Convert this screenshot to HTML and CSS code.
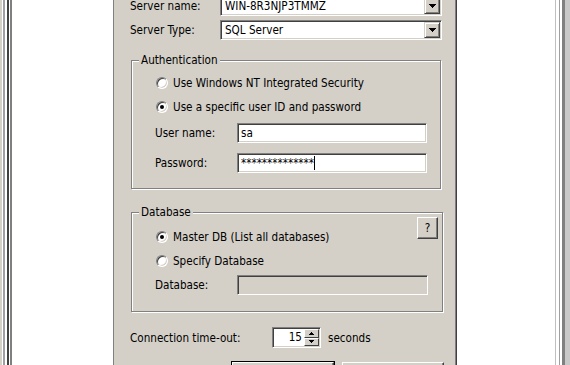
FILE: index.html
```html
<!DOCTYPE html>
<html lang="en">
<head>
    <meta charset="UTF-8">
    <title>Connection Properties</title>
    <link rel="stylesheet" href="styles.css">
</head>
<body>

    <div class="frame-left"></div>

    <div class="dialog">
        <div class="form">
            <div class="field-row">
                <span class="label server-label">Server name:</span>
                <div class="combo">
                    <span class="combo-text">WIN-8R3NJP3TMMZ</span>
                    <span class="combo-btn">
                        <svg width="7" height="4" viewBox="0 0 7 4" shape-rendering="crispEdges"><path d="M0 0h7v1H0zM1 1h5v1H1zM2 2h3v1H2zM3 3h1v1H3z" fill="#000"/></svg>
                    </span>
                </div>
            </div>
            <div class="field-row">
                <span class="label server-label">Server Type:</span>
                <div class="combo">
                    <span class="combo-text">SQL Server</span>
                    <span class="combo-btn">
                        <svg width="7" height="4" viewBox="0 0 7 4" shape-rendering="crispEdges"><path d="M0 0h7v1H0zM1 1h5v1H1zM2 2h3v1H2zM3 3h1v1H3z" fill="#000"/></svg>
                    </span>
                </div>
            </div>

            <fieldset class="group auth">
                <legend>Authentication</legend>
                <div class="group-body auth-body">
                    <div class="radio-row"><span class="radio"></span>Use Windows NT Integrated Security</div>
                    <div class="radio-row"><span class="radio checked"></span>Use a specific user ID and password</div>
                    <div class="input-row user-row">
                        <span class="label input-label">User name:</span>
                        <div class="textbox">sa</div>
                    </div>
                    <div class="input-row pass-row">
                        <span class="label input-label">Password:</span>
                        <div class="textbox">**************<span class="caret"></span></div>
                    </div>
                </div>
            </fieldset>

            <fieldset class="group database">
                <legend>Database</legend>
                <div class="group-body db-body">
                    <div class="radio-row">
                        <span class="radio checked"></span>Master DB (List all databases)
                        <button class="button help-btn">?</button>
                    </div>
                    <div class="radio-row"><span class="radio"></span>Specify Database</div>
                    <div class="input-row db-row">
                        <span class="label input-label">Database:</span>
                        <div class="textbox disabled"></div>
                    </div>
                </div>
            </fieldset>

            <div class="timeout-row">
                <span class="label timeout-label">Connection time-out:</span>
                <div class="spinner">
                    <span class="spin-value">15</span>
                    <span class="spin-btns">
                        <span class="spin-btn"><svg width="5" height="3" viewBox="0 0 5 3" shape-rendering="crispEdges"><path d="M2 0h1v1H2zM1 1h3v1H1zM0 2h5v1H0z" fill="#000"/></svg></span>
                        <span class="spin-btn"><svg width="5" height="3" viewBox="0 0 5 3" shape-rendering="crispEdges"><path d="M0 0h5v1H0zM1 1h3v1H1zM2 2h1v1H2z" fill="#000"/></svg></span>
                    </span>
                </div>
                <span class="seconds">seconds</span>
            </div>

            <!-- OK / Cancel, only their top edges are in view -->
            <div class="dialog-buttons">
                <button class="button default-btn"></button>
                <button class="button"></button>
            </div>
        </div>
    </div>

    <div class="frame-right"></div>

</body>
</html>
```

FILE: styles.css
```css
body {
    margin: 0;
    display: flex;
    height: 365px;
    overflow: hidden;
    background-color: #fff;
    font-family: 'DejaVu Sans Condensed', 'DejaVu Sans', sans-serif;
    font-size: 11.6px;
    color: #000;
}
.frame-left {
    width: 114px;
    flex-shrink: 0;
    background: linear-gradient(to right,
        #d4d0c8 0 2px, #fff 2px 3px, #a0a0a0 3px 5px, #fff 5px 7px,
        #404040 7px 9px, #fff 9px 10px, #808080 10px 12px,
        #fff 12px 113px, #808080 113px 114px);
}
.frame-right {
    flex: 1;
    background: linear-gradient(to right,
        #808080 0 1px, #404040 1px 2px, #fff 2px 100px,
        #c0c0c0 100px 101px, #fff 101px 104px, #a0a0a0 104px 105px,
        #fff 105px 107px, #808080 107px 110px, #c8c8c8 110px 115px);
}
.dialog {
    width: 341px;
    flex-shrink: 0;
    background-color: #d4d0c8;
    padding-left: 16px;
    box-sizing: border-box;
}
.form {
    margin-top: -4px;
}
.label {
    flex-shrink: 0;
    white-space: nowrap;
}
.field-row {
    display: flex;
    align-items: center;
    height: 20px;
    margin-bottom: 4px;
    line-height: 12px;
}
.server-label {
    width: 90px;
}

/* sunken boxes */
.combo, .textbox, .spinner {
    box-sizing: border-box;
    background-color: #fff;
    border: 1px solid;
    border-color: #808080 #fff #fff #808080;
    box-shadow: inset 1px 1px #404040, inset -1px -1px #d4d0c8;
}
.combo {
    display: flex;
    align-items: center;
    width: 222px;
    height: 20px;
    padding: 1px;
}
.combo-text {
    flex: 1;
    padding-left: 3px;
}
.combo-btn {
    display: flex;
    align-items: center;
    justify-content: center;
    width: 16px;
    height: 16px;
    box-sizing: border-box;
    background-color: #d4d0c8;
    border: 1px solid;
    border-color: #d4d0c8 #404040 #404040 #d4d0c8;
    box-shadow: inset 1px 1px #fff, inset -1px -1px #808080;
}

/* group boxes */
.group {
    margin: 13px 0 0 1px;
    padding: 0;
    border: 1px solid #808080;
    box-shadow: inset 1px 1px #fff, 1px 1px #fff;
    box-sizing: border-box;
}
.group legend {
    margin-left: 7px;
    padding: 0 2px;
    line-height: 14px;
    background-color: #d4d0c8;
}
.auth {
    width: 310px;
}
.database {
    width: 312px;
    margin-top: 16px;
}
.group-body {
    padding-left: 24px;
}
.auth-body {
    padding-top: 4px;
    padding-bottom: 15px;
}
.db-body {
    padding-top: 6px;
    padding-bottom: 16px;
    padding-right: 4px;
}
.radio-row {
    display: flex;
    align-items: center;
    height: 24px;
    white-space: nowrap;
}
.radio {
    position: relative;
    width: 12px;
    height: 12px;
    margin-right: 5px;
    box-sizing: border-box;
    border-radius: 50%;
    background-color: #fff;
    border: 1px solid;
    border-color: #808080 #fff #fff #808080;
    box-shadow: inset 1px 1px #404040, inset -1px -1px #d4d0c8;
}
.radio.checked::after {
    content: '';
    position: absolute;
    left: 3px;
    top: 3px;
    width: 4px;
    height: 4px;
    border-radius: 50%;
    background-color: #000;
}
.input-row {
    display: flex;
    align-items: center;
    margin-left: -1px;
}
.input-label {
    width: 82px;
}
.textbox {
    width: 190px;
    height: 20px;
    padding: 0 3px;
    display: flex;
    align-items: center;
}
.textbox.disabled {
    background-color: #d4d0c8;
    width: 191px;
}
.caret {
    display: inline-block;
    width: 1px;
    height: 14px;
    background-color: #000;
}
.user-row {
    margin-top: 4px;
}
.pass-row {
    margin-top: 10px;
}
.db-row {
    margin-top: 2px;
}

/* buttons */
.button {
    font-family: inherit;
    font-size: 11.6px;
    color: #000;
    background-color: #d4d0c8;
    border: 1px solid;
    border-color: #fff #404040 #404040 #fff;
    box-shadow: inset -1px -1px #808080;
    padding: 0;
    box-sizing: border-box;
}
.help-btn {
    align-self: flex-start;
    margin-left: auto;
    margin-top: -8px;
    width: 21px;
    height: 22px;
}
.timeout-row {
    display: flex;
    align-items: center;
    height: 21px;
    margin-top: 15px;
}
.timeout-label {
    width: 142px;
}
.spinner {
    display: flex;
    width: 49px;
    height: 21px;
    padding: 1px;
}
.spin-value {
    flex: 1;
    text-align: right;
    padding-right: 2px;
    line-height: 17px;
}
.spin-btns {
    display: flex;
    flex-direction: column;
    width: 15px;
}
.spin-btn {
    flex: 1;
    display: flex;
    align-items: center;
    justify-content: center;
    box-sizing: border-box;
    background-color: #d4d0c8;
    border: 1px solid;
    border-color: #fff #404040 #404040 #fff;
}
.seconds {
    margin-left: 7px;
}
.dialog-buttons {
    display: flex;
    gap: 8px;
    margin-top: 14px;
    padding-left: 102px;
}
.dialog-buttons .button {
    width: 102px;
    height: 23px;
}
.default-btn {
    outline: 1px solid #000;
    width: 103px;
}
```
